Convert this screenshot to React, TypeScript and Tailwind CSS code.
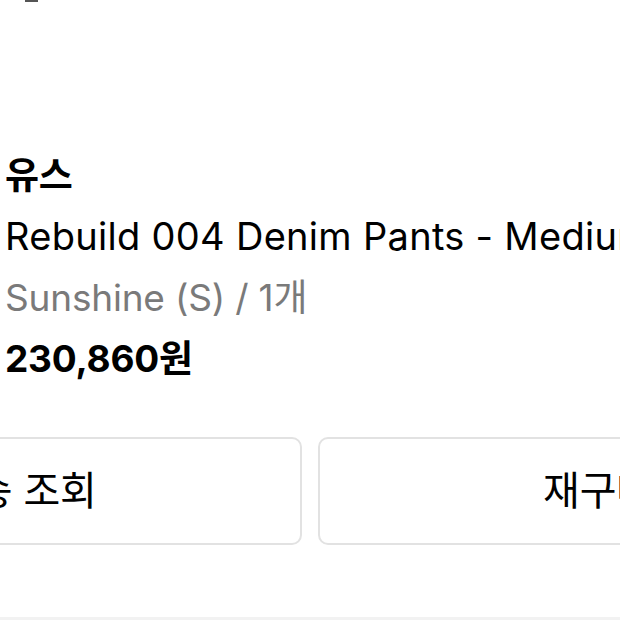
export default function App() {
  return (
    <div className="w-[620px] h-[620px] overflow-hidden bg-white flex flex-col">
      <div className="h-[3px] flex">
        <div className="ml-[25px] w-[13px] h-[2px] bg-[#555]" />
      </div>
      <div className="flex flex-col ml-[-266px] w-[1152px] font-['Inter','Noto_Sans_CJK_KR',sans-serif] text-[37px] tracking-[-0.2px]">
        <div className="pl-[271px] pt-[142px] flex flex-col">
          <div className="font-bold leading-[61px] text-black">유스</div>
          <div className="leading-[61px] text-black whitespace-nowrap text-[38px] tracking-[0.3px]">Rebuild 004 Denim Pants - Medium</div>
          <div className="leading-[61px] text-[#7a7a7a] whitespace-nowrap">Sunshine (S) / 1개</div>
          <div className="font-bold leading-[61px] text-black">230,860원</div>
        </div>
        <div className="grid grid-cols-2 gap-4 mt-[48px] text-[40px]">
          <div className="h-[108px] rounded-[10px] border-2 border-[#e2e2e2] flex items-center justify-center text-black">배송 조회</div>
          <div className="h-[108px] rounded-[10px] border-2 border-[#e2e2e2] flex items-center justify-center text-black pr-[8px]">재구매</div>
        </div>
      </div>
      <div className="mt-auto h-[3px] bg-[#f2f2f2]" />
    </div>
  );
}
